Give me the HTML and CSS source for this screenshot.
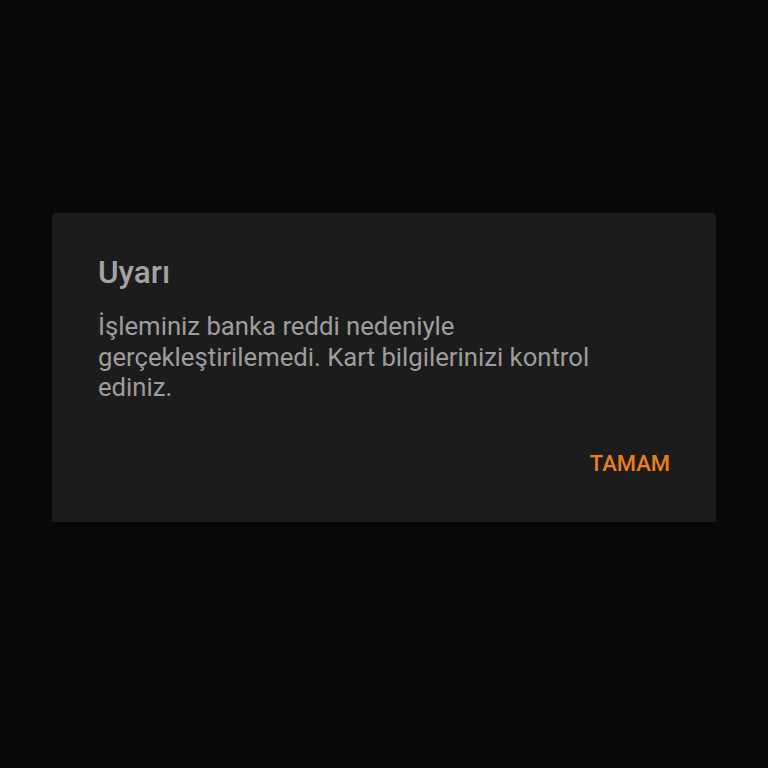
FILE: index.html
```html
<!DOCTYPE html>
<html lang="tr">
<head>
<meta charset="utf-8">
<link rel="stylesheet" href="styles.css">
</head>
<body>
<div class="screen">
  <div class="dialog">
    <h1 class="title">Uyarı</h1>
    <p class="message">İşleminiz banka reddi nedeniyle gerçekleştirilemedi. Kart bilgilerinizi kontrol ediniz.</p>
    <div class="actions">
      <button class="btn">TAMAM</button>
    </div>
  </div>
</div>
</body>
</html>
```
FILE: styles.css
```css
html, body {
  margin: 0;
  padding: 0;
  background: #080808;
}
.screen {
  width: 768px;
  height: 768px;
  display: flex;
  flex-direction: column;
  padding: 213px 52px 0 52px;
  box-sizing: border-box;
  font-family: Roboto, "Noto Sans", sans-serif;
}
.dialog {
  width: 664px;
  height: 309px;
  box-sizing: border-box;
  background: #1c1c1c;
  border-radius: 3px;
  padding: 42px 46px 0 46px;
  display: flex;
  flex-direction: column;
}
.title {
  margin: 0;
  font-size: 31.5px;
  font-weight: 500;
  line-height: 36px;
  color: #a3a3a3;
}
.message {
  margin: 20px 0 0 0;
  font-size: 25.7px;
  line-height: 30.5px;
  color: #9d9d9d;
  width: 540px;
}
.actions {
  display: flex;
  justify-content: flex-end;
  margin-top: 47px;
}
.btn {
  background: none;
  border: none;
  padding: 0;
  font-family: Roboto, "Noto Sans", sans-serif;
  font-weight: 500;
  font-size: 22px;
  line-height: 28px;
  color: #ea7d1c;
}
```
